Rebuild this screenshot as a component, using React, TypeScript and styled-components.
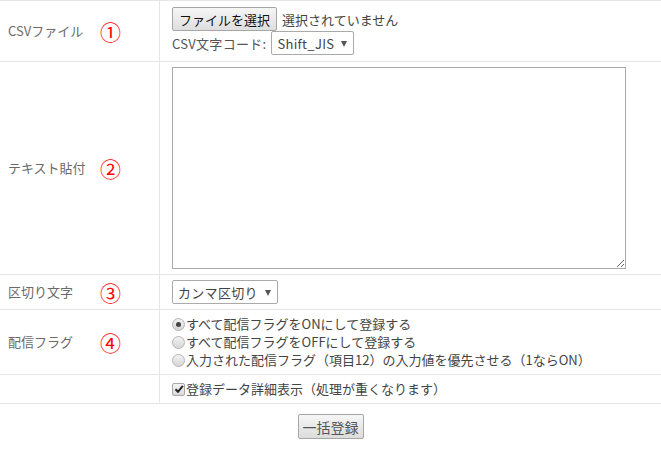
import React, { useState } from "react";
import styled, { createGlobalStyle } from "styled-components";

const GlobalStyle = createGlobalStyle`
  html, body {
    margin: 0;
    padding: 0;
    background: #fff;
  }
  body {
    font-family: "Noto Sans CJK JP", "Noto Sans", sans-serif;
    font-size: 13px;
    color: #333;
  }
`;

const DELIVERY_OPTIONS = [
  "すべて配信フラグをONにして登録する",
  "すべて配信フラグをOFFにして登録する",
  "入力された配信フラグ（項目12）の入力値を優先させる（1ならON）",
];

function App() {
  const [flag, setFlag] = useState(0);
  const [detail, setDetail] = useState(true);

  return (
    <>
      <GlobalStyle />
      <Page>
        <FormTable>
          <LabelCell>
            <LabelText>CSVファイル</LabelText>
            <StepNo>①</StepNo>
          </LabelCell>
          <ValueCell>
            <FileLine>
              <GrayButton>ファイルを選択</GrayButton>
              <FileStatus>選択されていません</FileStatus>
            </FileLine>
            <CodeLine>
              CSV文字コード:
              <SelectBox>
                Shift_JIS
                <Arrow />
              </SelectBox>
            </CodeLine>
          </ValueCell>

          <LabelCell>
            <LabelText>テキスト貼付</LabelText>
            <StepNo>②</StepNo>
          </LabelCell>
          <ValueCell>
            <PasteArea />
          </ValueCell>

          <LabelCell>
            <LabelText>区切り文字</LabelText>
            <StepNo>③</StepNo>
          </LabelCell>
          <ValueCell>
            <SelectBox>
              カンマ区切り
              <Arrow />
            </SelectBox>
          </ValueCell>

          <LabelCell>
            <LabelText>配信フラグ</LabelText>
            <StepNo>④</StepNo>
          </LabelCell>
          <ValueCell>
            {DELIVERY_OPTIONS.map((text, i) => (
              <OptionLine key={text} onClick={() => setFlag(i)}>
                <Radio checked={flag === i} />
                {text}
              </OptionLine>
            ))}
          </ValueCell>

          <LabelCell />
          <ValueCell>
            <OptionLine onClick={() => setDetail(!detail)}>
              <CheckBox checked={detail}>
                {detail && (
                  <svg width="10" height="10" viewBox="0 0 10 10">
                    <path
                      d="M1.5 5.2 L4 7.8 L8.8 1.8"
                      fill="none"
                      stroke="#222"
                      strokeWidth="2"
                    />
                  </svg>
                )}
              </CheckBox>
              登録データ詳細表示（処理が重くなります）
            </OptionLine>
          </ValueCell>
        </FormTable>
        <SubmitRow>
          <SubmitButton>一括登録</SubmitButton>
        </SubmitRow>
      </Page>
    </>
  );
}

const Page = styled.div`
  width: 661px;
`;

const FormTable = styled.div`
  display: grid;
  grid-template-columns: 160px 1fr;
  border-top: 1px solid #e6e6e6;
`;

const LabelCell = styled.div`
  display: flex;
  align-items: center;
  padding-left: 8px;
  border-right: 1px solid #e6e6e6;
  border-bottom: 1px solid #e6e6e6;
  color: #6a6a6a;
`;

const LabelText = styled.span`
  width: 92px;
  line-height: 18px;
`;

const StepNo = styled.span`
  color: #f00;
  font-size: 21px;
  line-height: 18px;
`;

const ValueCell = styled.div`
  display: flex;
  flex-direction: column;
  align-items: flex-start;
  padding: 5px 12px 5px 12px;
  border-bottom: 1px solid #e6e6e6;
`;

const FileLine = styled.div`
  display: flex;
  align-items: center;
  margin-top: 1px;
`;

const GrayButton = styled.button`
  height: 24px;
  padding: 0 6px;
  font-family: inherit;
  font-size: 13px;
  color: #111;
  background: linear-gradient(#f6f6f6, #dedede);
  border: 1px solid #a6a6a6;
  border-radius: 2px;
`;

const FileStatus = styled.span`
  margin-left: 5px;
  color: #444;
`;

const CodeLine = styled.div`
  display: flex;
  align-items: center;
  gap: 5px;
  color: #555;
  letter-spacing: 0.3px;
  margin-bottom: 1px;
`;

const SelectBox = styled.div`
  display: flex;
  align-items: center;
  height: 24px;
  box-sizing: border-box;
  padding: 0 6px 0 5px;
  border: 1px solid #aaa;
  border-radius: 2px;
  background: #fff;
  color: #444;
  font-size: 13px;
  letter-spacing: 0.3px;
`;

const Arrow = styled.span`
  width: 0;
  height: 0;
  margin-left: 7px;
  margin-top: 1px;
  border-left: 3px solid transparent;
  border-right: 3px solid transparent;
  border-top: 6px solid #555;
`;

const PasteArea = styled.textarea`
  width: 454px;
  height: 202px;
  box-sizing: border-box;
  border: 1px solid #a9a9a9;
  border-radius: 0;
  font-family: inherit;
  font-size: 13px;
  outline: none;
`;

const OptionLine = styled.label`
  display: flex;
  align-items: center;
  line-height: 18px;
  color: #444;
  cursor: pointer;
`;

const Radio = styled.span<{ checked: boolean }>`
  position: relative;
  width: 11px;
  height: 11px;
  margin-right: 1px;
  border: 1px solid #b5b5b5;
  border-radius: 50%;
  background: linear-gradient(#f2f2f2, #d6d6d6);
  &::after {
    content: "";
    display: ${({ checked }) => (checked ? "block" : "none")};
    position: absolute;
    left: 3px;
    top: 3px;
    width: 5px;
    height: 5px;
    border-radius: 50%;
    background: #444;
  }
`;

const CheckBox = styled.span<{ checked: boolean }>`
  display: flex;
  align-items: center;
  justify-content: center;
  width: 11px;
  height: 11px;
  margin-right: 1px;
  border: 1px solid #a8a8a8;
  border-radius: 2px;
  background: linear-gradient(#f4f4f4, #dadada);
`;

const SubmitRow = styled.div`
  display: flex;
  justify-content: center;
  padding-top: 10px;
`;

const SubmitButton = styled.button`
  width: 66px;
  height: 25px;
  padding: 0;
  font-family: inherit;
  font-size: 14px;
  color: #555;
  background: linear-gradient(#f6f6f6, #dcdcdc);
  border: 1px solid #a6a6a6;
  border-radius: 2px;
`;

export default App;
